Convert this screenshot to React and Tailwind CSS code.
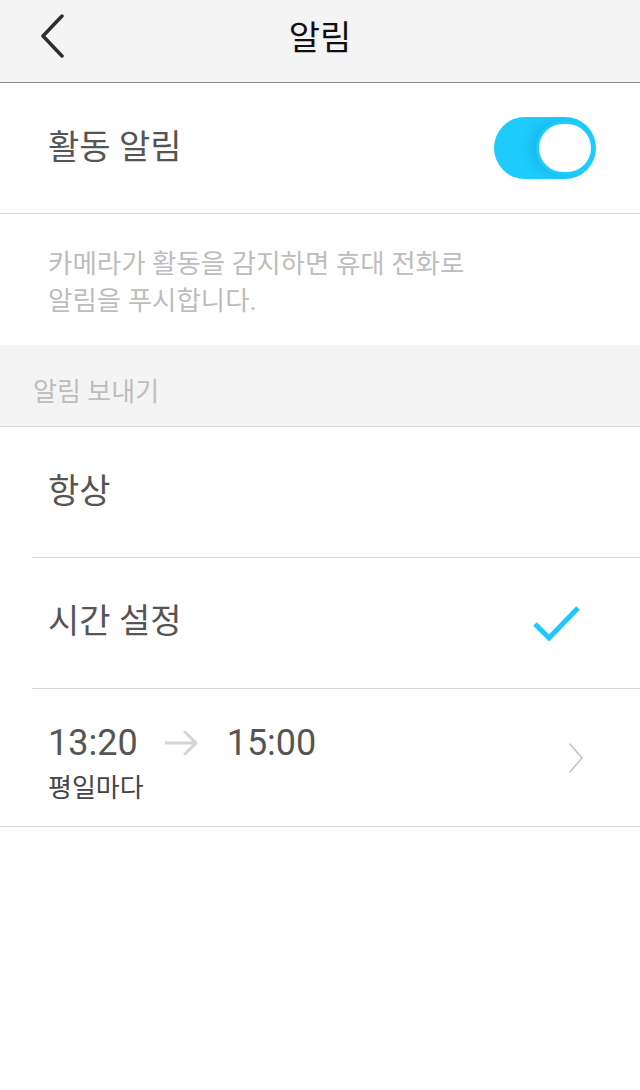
const FONT = "font-['Roboto','Noto_Sans_CJK_KR',sans-serif]";

const Toggle = () => (
  <div className="relative h-[62px] w-[102px] rounded-full bg-[#1ecbfd]">
    <div className="absolute right-[2px] top-[4px] h-[54px] w-[58px] rounded-full bg-[#1ecbfd] shadow-[-8px_0_10px_rgba(0,120,170,0.18)]">
      <div className="absolute inset-[3px] rounded-full bg-white" />
    </div>
  </div>
);

const Check = () => (
  <svg width="50" height="40" viewBox="0 0 50 40" fill="none">
    <path d="M3 21 L17 35 L46 5" stroke="#1ec8fc" strokeWidth="5" strokeLinecap="butt" strokeLinejoin="miter" />
  </svg>
);

export default function App() {
  return (
    <div className={`${FONT} h-[1090px] w-[640px] bg-white`}>
      {/* header */}
      <header className="relative flex h-[83px] items-center justify-center border-b border-[#8c8c8c] bg-[#f4f4f4]">
        <button className="absolute left-[38px] top-[14px]">
          <svg width="30" height="44" viewBox="0 0 30 44" fill="none">
            <path d="M24 2 L5 22 L24 42" stroke="#2e2e2e" strokeWidth="3.5" strokeLinecap="round" strokeLinejoin="round" />
          </svg>
        </button>
        <h1 className="pb-[6px] text-[34px] text-[#111]">알림</h1>
      </header>

      {/* activity alarm */}
      <div className="flex h-[131px] items-center justify-between border-b border-[#d9d9d9] pl-[48px] pr-[44px]">
        <span className="pb-[2px] text-[34px] text-[#555]">활동 알림</span>
        <Toggle />
      </div>

      <div className="h-[131px] px-[48px] pt-[31px] text-[26.5px] leading-[37px] text-[#bdbdbd]">
        카메라가 활동을 감지하면 휴대 전화로
        <br />
        알림을 푸시합니다.
      </div>

      {/* section title */}
      <div className="flex h-[82px] items-center border-b border-[#d9d9d9] bg-[#f4f4f4] pl-[33px] pt-[14px] text-[26px] text-[#bdbdbd]">
        알림 보내기
      </div>

      <div className="pl-[32px]">
        <div className="flex h-[131px] items-center border-b border-[#d9d9d9] pl-[16px]">
          <span className="pb-[2px] text-[34px] text-[#555]">항상</span>
        </div>
        <div className="flex h-[131px] items-center justify-between border-b border-[#d9d9d9] pl-[16px] pr-[58px]">
          <span className="pb-[4px] text-[34px] text-[#555]">시간 설정</span>
          <Check />
        </div>
      </div>

      <div className="flex h-[138px] items-center justify-between border-b border-[#d9d9d9] pl-[48px] pr-[56px]">
        <div className="flex flex-col pt-[10px]">
          <div className="flex items-center text-[36px] leading-[44px] text-[#555]">
            <span>13:20</span>
            <svg className="ml-[27px] mr-[28px]" width="34" height="26" viewBox="0 0 34 26" fill="none">
              <path d="M1 13 H31 M20 2 L31 13 L20 24" stroke="#d4d4d4" strokeWidth="3" strokeLinecap="round" strokeLinejoin="round" />
            </svg>
            <span>15:00</span>
          </div>
          <span className="mt-[6px] text-[26px] leading-[34px] text-[#444]">평일마다</span>
        </div>
        <svg width="16" height="32" viewBox="0 0 16 32" fill="none">
          <path d="M2 2 L14 16 L2 30" stroke="#c4c4c4" strokeWidth="1.6" strokeLinecap="round" strokeLinejoin="round" />
        </svg>
      </div>
    </div>
  );
}
